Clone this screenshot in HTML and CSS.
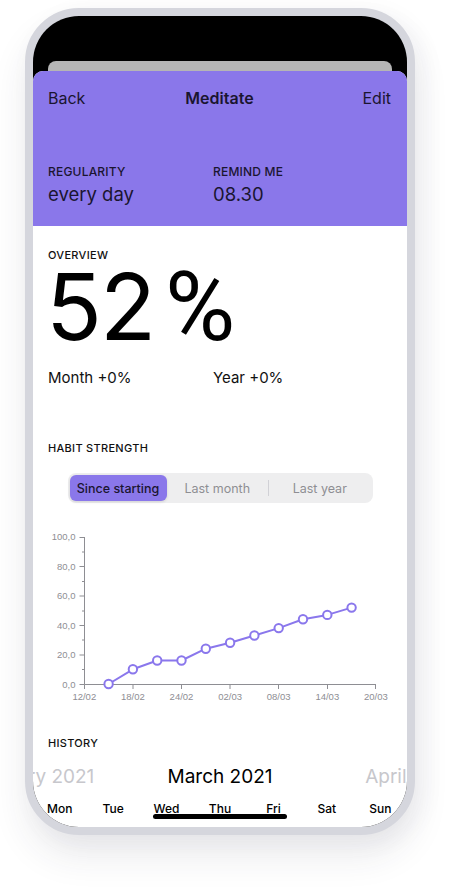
FILE: index.html
```html
<!DOCTYPE html>
<html lang="en">
<head>
<meta charset="utf-8">
<title>Meditate</title>
<link rel="stylesheet" href="styles.css">
</head>
<body>
<div class="phone">
  <div class="screen">
    <div class="sheet-back"></div>
    <div class="sheet">
      <header class="hero">
        <nav class="nav">
          <span class="nav-left">Back</span>
          <span class="nav-title">Meditate</span>
          <span class="nav-right">Edit</span>
        </nav>
        <div class="info">
          <div class="info-col">
            <div class="label">REGULARITY</div>
            <div class="value">every day</div>
          </div>
          <div class="info-col">
            <div class="label">REMIND ME</div>
            <div class="value">08.30</div>
          </div>
        </div>
      </header>
      <main class="content">
        <section class="pad overview">
          <div class="section-title">OVERVIEW</div>
          <div class="big">52<span class="pct">%</span></div>
          <div class="stats">
            <span>Month +0%</span>
            <span>Year +0%</span>
          </div>
        </section>
        <section class="pad strength">
          <div class="section-title">HABIT STRENGTH</div>
          <div class="segmented">
            <div class="seg seg-active">Since starting</div>
            <div class="seg">Last month</div>
            <div class="seg-divider"></div>
            <div class="seg">Last year</div>
          </div>
          <svg class="chart" width="344" height="190" viewBox="48 520 344 190" xmlns="http://www.w3.org/2000/svg">
            <g class="axis" stroke="#8e8e93" stroke-width="1" fill="none">
              <line x1="84.5" y1="537" x2="84.5" y2="684.5"/>
              <line x1="84.5" y1="684.5" x2="376" y2="684.5"/>
              <line x1="79.5" y1="537.5" x2="84.5" y2="537.5"/>
              <line x1="79.5" y1="566.5" x2="84.5" y2="566.5"/>
              <line x1="79.5" y1="596" x2="84.5" y2="596"/>
              <line x1="79.5" y1="625.5" x2="84.5" y2="625.5"/>
              <line x1="79.5" y1="655" x2="84.5" y2="655"/>
              <line x1="79.5" y1="684.5" x2="84.5" y2="684.5"/>
              <line x1="82" y1="552" x2="84.5" y2="552"/>
              <line x1="82" y1="581.5" x2="84.5" y2="581.5"/>
              <line x1="82" y1="611" x2="84.5" y2="611"/>
              <line x1="82" y1="640" x2="84.5" y2="640"/>
              <line x1="82" y1="669.5" x2="84.5" y2="669.5"/>
              <line x1="84.5" y1="684.5" x2="84.5" y2="689"/>
              <line x1="133" y1="684.5" x2="133" y2="689"/>
              <line x1="181.5" y1="684.5" x2="181.5" y2="689"/>
              <line x1="230" y1="684.5" x2="230" y2="689"/>
              <line x1="278.5" y1="684.5" x2="278.5" y2="689"/>
              <line x1="327.5" y1="684.5" x2="327.5" y2="689"/>
              <line x1="375.5" y1="684.5" x2="375.5" y2="689"/>
            </g>
            <g class="ticklabels" fill="#8e8e93" text-anchor="end">
              <text x="75.5" y="540.4">100,0</text>
              <text x="75.5" y="570">80,0</text>
              <text x="75.5" y="599.4">60,0</text>
              <text x="75.5" y="628.8">40,0</text>
              <text x="75.5" y="658.2">20,0</text>
              <text x="75.5" y="687.6">0,0</text>
            </g>
            <g class="ticklabels" fill="#8e8e93" text-anchor="middle">
              <text x="84.3" y="700.3">12/02</text>
              <text x="132.9" y="700.3">18/02</text>
              <text x="181.5" y="700.3">24/02</text>
              <text x="230.1" y="700.3">02/03</text>
              <text x="278.7" y="700.3">08/03</text>
              <text x="327.3" y="700.3">14/03</text>
              <text x="375.9" y="700.3">20/03</text>
            </g>
            <polyline fill="none" stroke="#8a77ec" stroke-width="2" stroke-linejoin="round"
              points="108.6,684 132.9,669.3 157.2,660.5 181.5,660.5 205.8,648.7 230.1,642.8 254.4,635.5 278.7,628.1 303,619.3 327.3,614.9 351.6,607.6"/>
            <g fill="#ffffff" stroke="#8a77ec" stroke-width="2">
              <circle cx="108.6" cy="684" r="4.2"/>
              <circle cx="132.9" cy="669.3" r="4.2"/>
              <circle cx="157.2" cy="660.5" r="4.2"/>
              <circle cx="181.5" cy="660.5" r="4.2"/>
              <circle cx="205.8" cy="648.7" r="4.2"/>
              <circle cx="230.1" cy="642.8" r="4.2"/>
              <circle cx="254.4" cy="635.5" r="4.2"/>
              <circle cx="278.7" cy="628.1" r="4.2"/>
              <circle cx="303" cy="619.3" r="4.2"/>
              <circle cx="327.3" cy="614.9" r="4.2"/>
              <circle cx="351.6" cy="607.6" r="4.2"/>
            </g>
          </svg>
        </section>
        <section class="history">
          <div class="pad section-title">HISTORY</div>
          <div class="months">
            <div class="month month-dim">February 2021</div>
            <div class="month">March 2021</div>
            <div class="month month-dim">April 2021</div>
          </div>
          <div class="weekdays">
            <span>Mon</span><span>Tue</span><span>Wed</span><span>Thu</span><span>Fri</span><span>Sat</span><span>Sun</span>
          </div>
        </section>
      </main>
    </div>
    <div class="home-indicator"></div>
  </div>
</div>
</body>
</html>
```
FILE: styles.css
```css
* { box-sizing: border-box; }

html, body {
  margin: 0;
  padding: 0;
  background: #ffffff;
}

body {
  width: 455px;
  height: 892px;
  overflow: hidden;
  font-family: "Inter", "Noto Sans", sans-serif;
  color: #111111;
}

.phone {
  margin: 8px 0 0 25px;
  width: 390px;
  height: 827px;
  border: 8px solid #d5d6dd;
  border-radius: 54px;
  box-shadow: 0 22px 36px rgba(40, 40, 70, 0.09), 8px 6px 24px rgba(40, 40, 70, 0.05);
  background: #d5d6dd;
}

.screen {
  position: relative;
  width: 100%;
  height: 100%;
  border-radius: 46px;
  overflow: hidden;
  background: #000000;
  display: flex;
  flex-direction: column;
}

.sheet-back {
  flex: 0 0 auto;
  margin: 45px 15px 0;
  height: 10px;
  background: #b5b5b5;
  border-radius: 8px 8px 0 0;
}

.sheet {
  flex: 1 1 auto;
  background: #ffffff;
  border-radius: 10px 10px 0 0;
  overflow: hidden;
  display: flex;
  flex-direction: column;
}

.hero {
  background: #8a77ea;
  padding: 17px 16px 21px 15px;
  color: #1a1530;
}

.nav {
  display: grid;
  grid-template-columns: 1fr auto 1fr;
  font-size: 16px;
  line-height: 20px;
}

.nav-title { font-weight: 600; }
.nav-right { justify-self: end; }

.info {
  margin-top: 57px;
  display: grid;
  grid-template-columns: 165px 1fr;
}

.label {
  font-size: 12px;
  line-height: 14px;
  font-weight: 500;
  letter-spacing: 0.2px;
  margin-bottom: 4px;
}

.value {
  font-size: 18.5px;
  line-height: 22px;
}

.content {
  display: flex;
  flex-direction: column;
}

.pad { padding: 0 15px; }

.section-title {
  font-size: 11px;
  line-height: 14px;
  font-weight: 500;
  letter-spacing: 0.3px;
  color: #111111;
}

.overview { padding-top: 22px; }

.big {
  height: 89px;
  font-size: 92px;
  line-height: 89px;
  font-weight: 400;
  letter-spacing: -2px;
  color: #000000;
  margin-left: -2px;
  white-space: nowrap;
}

.pct {
  font-family: "Roboto", "Inter", sans-serif;
  line-height: 0;
  margin-left: 11px;
  font-size: 96px;
}

.stats {
  margin-top: 17px;
  display: grid;
  grid-template-columns: 165px 1fr;
  font-size: 15px;
  line-height: 20px;
}

.strength { margin-top: 53px; }

.segmented {
  margin: 18px auto 0;
  width: 305px;
  height: 30px;
  background: #eeeeef;
  border-radius: 8px;
  padding: 2px;
  display: flex;
  align-items: center;
}

.seg {
  flex: 1 1 0;
  height: 26px;
  display: flex;
  align-items: center;
  justify-content: center;
  font-size: 12.5px;
  color: #8e8e93;
  border-radius: 6px;
}

.seg-active {
  flex: 0 0 97px;
  background: #8a77ea;
  color: #1a1530;
  font-weight: 500;
  box-shadow: 0 1px 3px rgba(0, 0, 0, 0.12);
}

.seg-divider {
  width: 1px;
  height: 16px;
  background: #d1d1d6;
}

.chart {
  display: block;
  margin-top: 17px;
}

.ticklabels {
  font-family: "Liberation Sans", Arial, sans-serif;
  font-size: 9.5px;
}

.history { margin-top: 26px; }

.months {
  margin-top: 15px;
  display: flex;
  justify-content: center;
  overflow: hidden;
}

.month {
  flex: 0 0 190px;
  text-align: center;
  font-size: 19px;
  line-height: 24px;
  color: #000000;
  white-space: nowrap;
}

.month-dim { color: #c7c7cc; }

.weekdays {
  margin-top: 12px;
  display: grid;
  grid-template-columns: repeat(7, 1fr);
  font-size: 12px;
  line-height: 16px;
  font-weight: 500;
  text-align: center;
  color: #000000;
}

.home-indicator {
  position: absolute;
  left: 50%;
  bottom: 8px;
  width: 134px;
  height: 5px;
  margin-left: -67px;
  border-radius: 3px;
  background: #000000;
}
```
